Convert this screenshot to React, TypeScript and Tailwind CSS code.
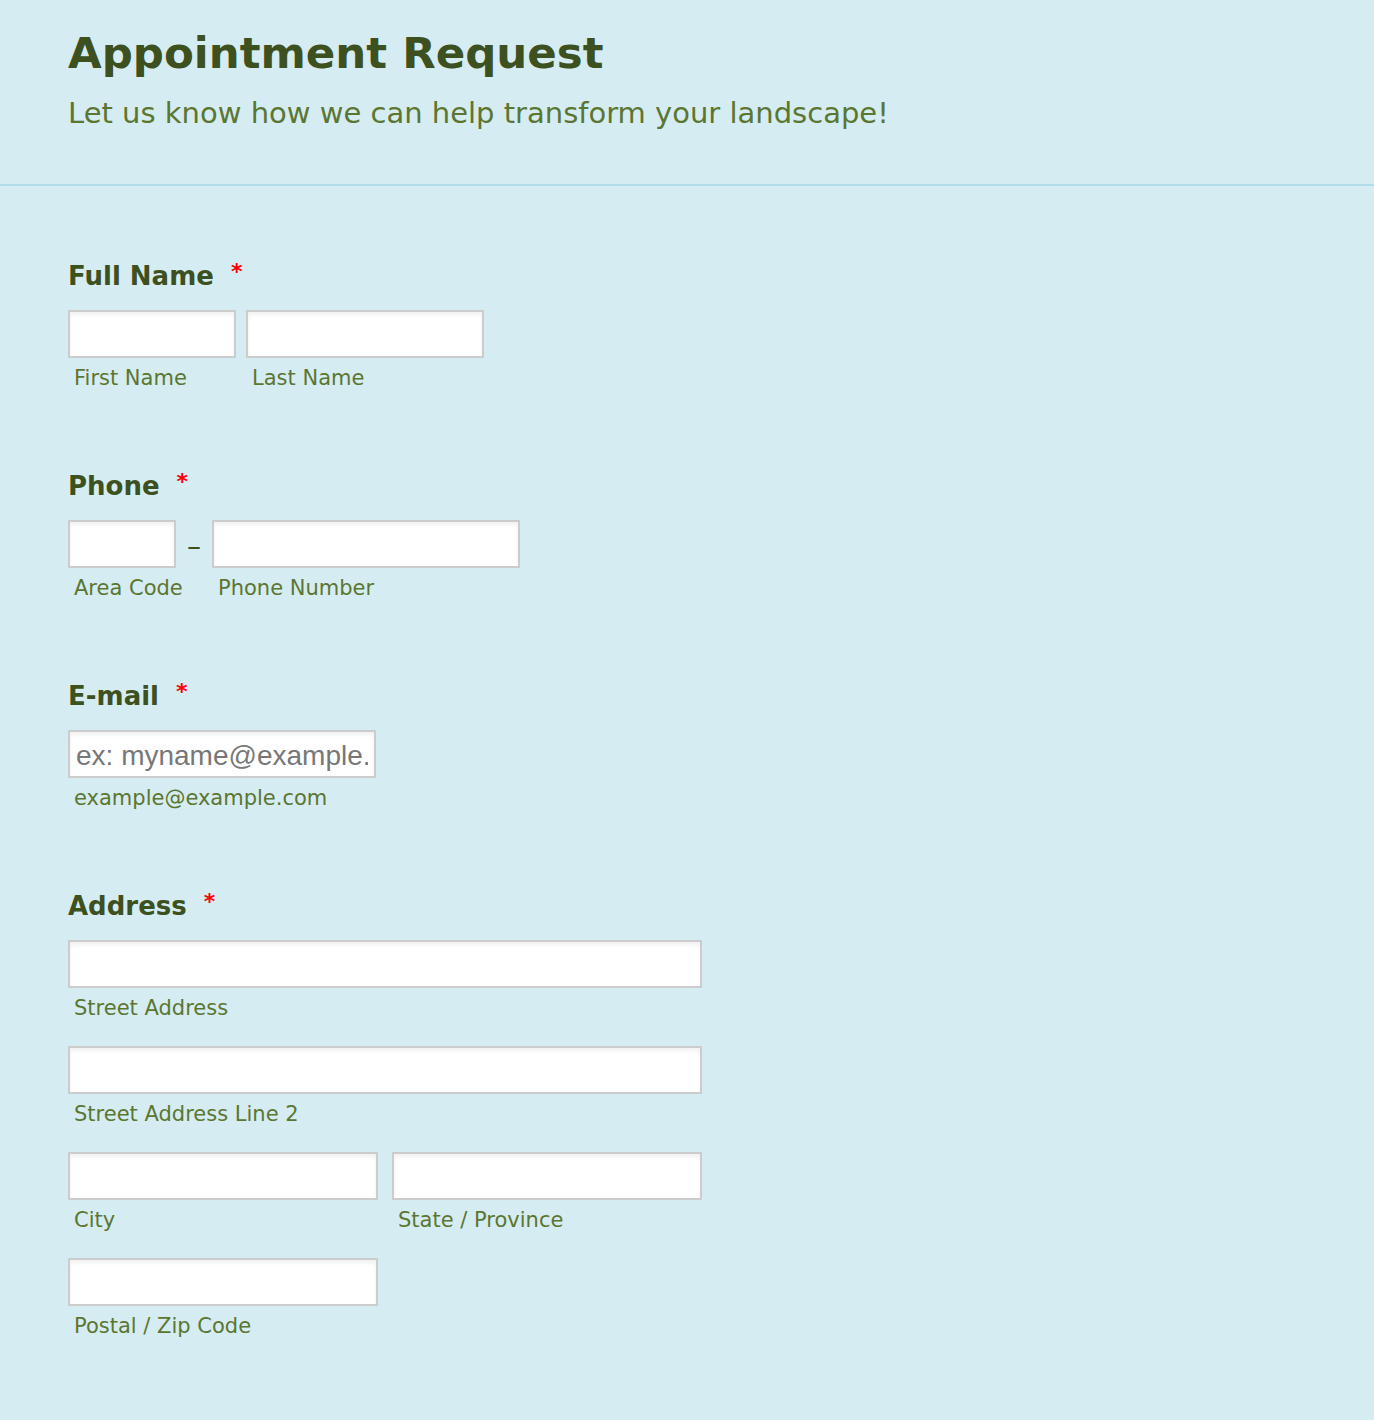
import React from 'react';

const font = { fontFamily: '"DejaVu Sans", "Noto Sans", sans-serif' };

function Field({ w, placeholder }: { w: string; placeholder?: string }) {
  return (
    <input
      type="text"
      placeholder={placeholder}
      className={`${w} h-[48px] bg-white border-2 border-[#cccccc] shadow-[inset_0_3px_4px_rgba(0,0,0,0.06)] px-[6px] pt-[3px] text-[28px] text-[#333] placeholder:text-[#777] outline-none`}
      style={{ fontFamily: '"Liberation Sans", Arial, sans-serif' }}
    />
  );
}

function Sub({ children, className = '' }: { children: React.ReactNode; className?: string }) {
  return (
    <div className={`mt-[6px] pl-[6px] whitespace-nowrap text-[21px] leading-[28px] text-[#5b7630] ${className}`}>{children}</div>
  );
}

function Label({ children }: { children: React.ReactNode }) {
  return (
    <div className="h-[36px] leading-[36px] text-[26px] font-bold text-[#3d5020] mb-[16px] flex items-center">
      <span>{children}</span>
      <span className="ml-[17px] text-[#ff0000] text-[22px] font-bold -mt-[8px]">*</span>
    </div>
  );
}

export default function App() {
  return (
    <div className="min-h-[1420px] bg-[#d6ecf3]" style={font}>
      <header className="h-[186px] px-[68px] pt-[25px] border-b-2 border-[#b3dcea]">
        <h1 className="text-[43.5px] leading-[56px] font-bold text-[#3d5020]">Appointment Request</h1>
        <p className="mt-[12px] text-[29px] leading-[40px] text-[#5b7630]">
          Let us know how we can help transform your landscape!
        </p>
      </header>

      <main className="px-[68px] pt-[72px]">
        <section>
          <Label>Full Name</Label>
          <div className="flex gap-[10px]">
            <div className="w-[168px]">
              <Field w="w-[168px]" />
              <Sub>First Name</Sub>
            </div>
            <div className="w-[238px]">
              <Field w="w-[238px]" />
              <Sub>Last Name</Sub>
            </div>
          </div>
        </section>

        <section className="mt-[76px]">
          <Label>Phone</Label>
          <div className="flex">
            <div className="w-[108px]">
              <Field w="w-[108px]" />
              <Sub>Area Code</Sub>
            </div>
            <div className="w-[36px] h-[48px] flex items-center justify-center pt-[6px] text-[28px] text-[#3d5020]">–</div>
            <div className="w-[308px]">
              <Field w="w-[308px]" />
              <Sub className="pl-[5px]">Phone Number</Sub>
            </div>
          </div>
        </section>

        <section className="mt-[76px]">
          <Label>E-mail</Label>
          <Field w="w-[308px]" placeholder="ex: myname@example.com" />
          <Sub>example@example.com</Sub>
        </section>

        <section className="mt-[76px]">
          <Label>Address</Label>
          <div className="flex flex-col gap-[24px] w-[634px]">
            <div>
              <Field w="w-[634px]" />
              <Sub>Street Address</Sub>
            </div>
            <div>
              <Field w="w-[634px]" />
              <Sub>Street Address Line 2</Sub>
            </div>
            <div className="flex gap-[14px]">
              <div className="w-[310px]">
                <Field w="w-[310px]" />
                <Sub>City</Sub>
              </div>
              <div className="w-[310px]">
                <Field w="w-[310px]" />
                <Sub className="pl-[5px]">State / Province</Sub>
              </div>
            </div>
            <div className="w-[310px]">
              <Field w="w-[310px]" />
              <Sub>Postal / Zip Code</Sub>
            </div>
          </div>
        </section>
      </main>
    </div>
  );
}
